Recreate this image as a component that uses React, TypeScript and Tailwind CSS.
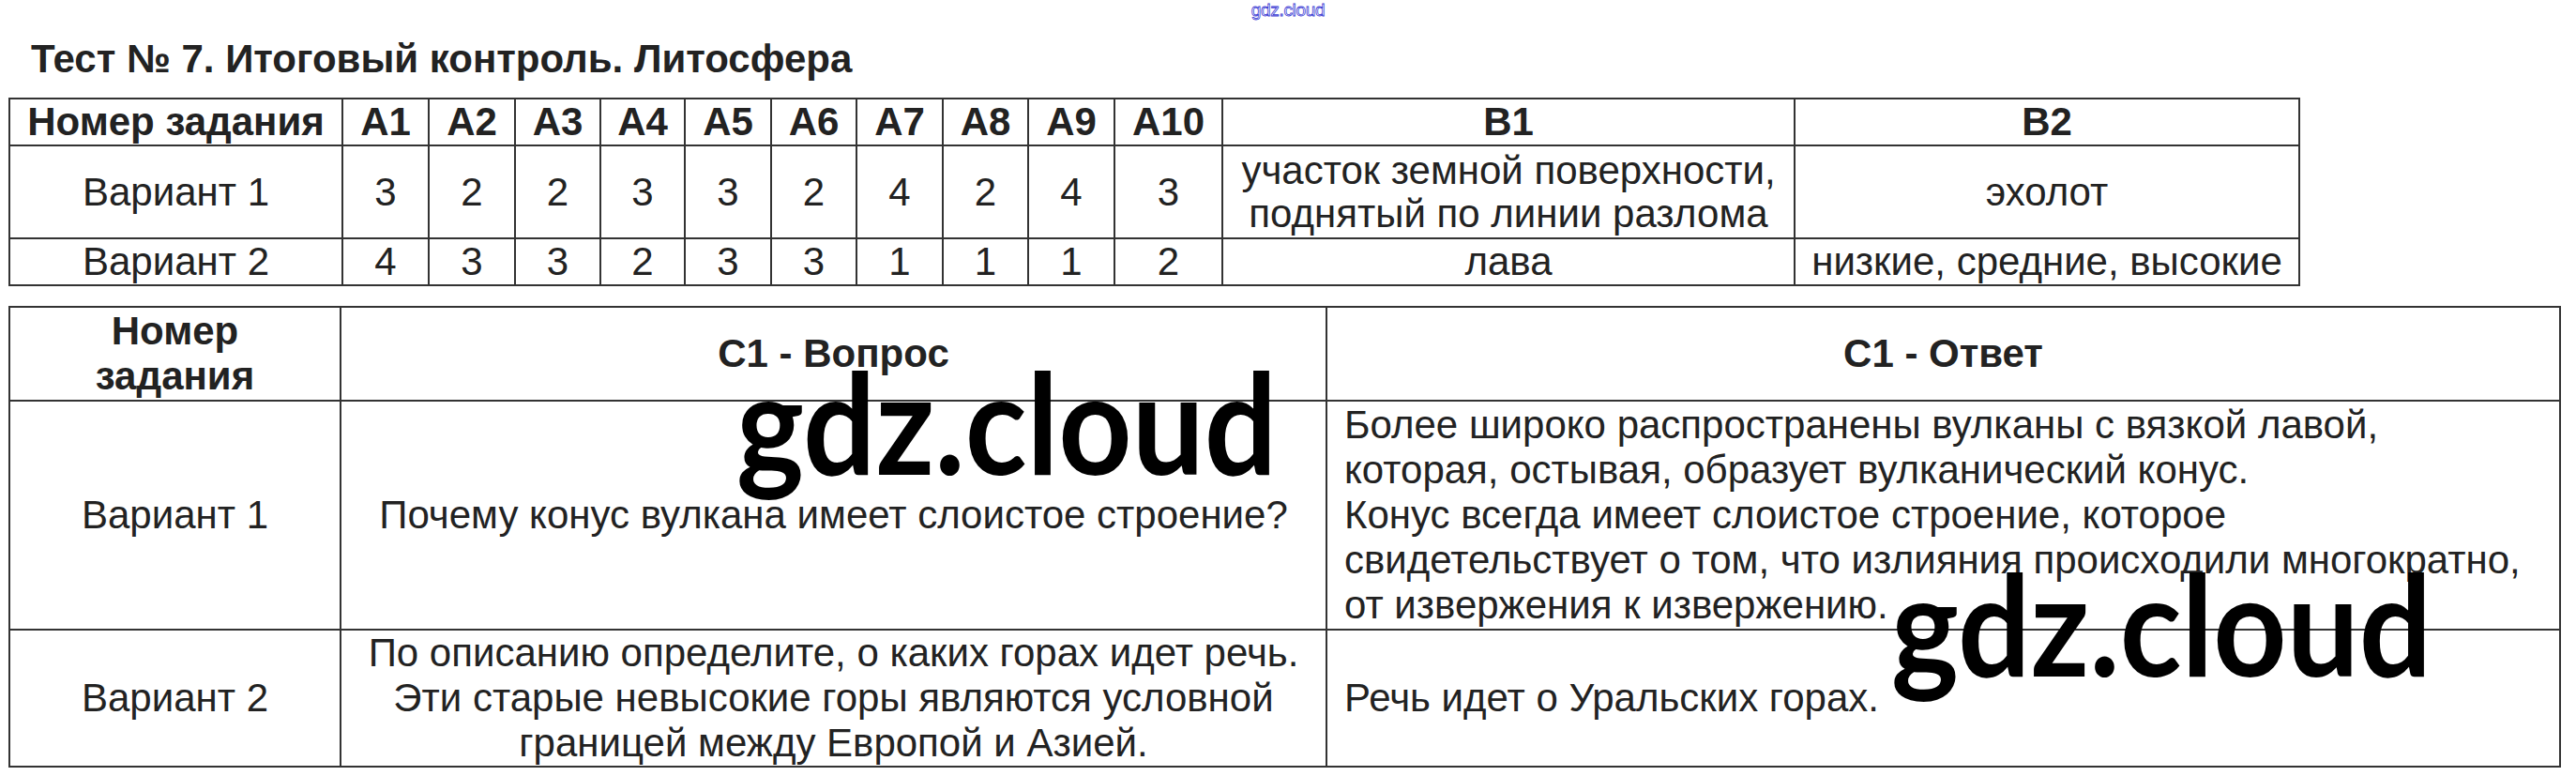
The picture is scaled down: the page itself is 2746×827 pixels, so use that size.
const answersV1 = ['3', '2', '2', '3', '3', '2', '4', '2', '4', '3'];
const answersV2 = ['4', '3', '3', '2', '3', '3', '1', '1', '1', '2'];
const aCols = [
  { label: 'A1', w: 92 },
  { label: 'A2', w: 92 },
  { label: 'A3', w: 91 },
  { label: 'A4', w: 90 },
  { label: 'A5', w: 92 },
  { label: 'A6', w: 91 },
  { label: 'A7', w: 92 },
  { label: 'A8', w: 91 },
  { label: 'A9', w: 92 },
  { label: 'A10', w: 115 },
];

const cell = 'border-2 border-[#333] text-center align-middle p-0';

function Watermark({ className = '' }: { className?: string }) {
  return (
    <div
      className={`absolute font-['Lato',sans-serif] font-bold text-[150px] leading-none text-black origin-top-left scale-x-[0.91] whitespace-nowrap pointer-events-none ${className}`}
    >
      gdz.cloud
    </div>
  );
}

export default function App() {
  return (
    <div className="relative w-[2746px] h-[827px] bg-white overflow-hidden font-['Liberation_Sans',Arial,sans-serif] text-[#222]">
      <div className="flex justify-center h-[22px]">
        <span className="text-[19px] leading-[22px] tracking-[-0.3px] text-white [-webkit-text-stroke:0.8px_#3b3bd4] font-['Liberation_Sans',sans-serif]">
          gdz.cloud
        </span>
      </div>

      <h1 className="ml-[33px] mt-[17px] text-[42px] leading-[48px] font-bold">
        Тест № 7. Итоговый контроль. Литосфера
      </h1>

      <table className="ml-[9px] mt-[17px] border-collapse table-fixed w-[2441px] text-[42px] leading-[46px]">
        <colgroup>
          <col className="w-[355px]" />
          {aCols.map((c) => (
            <col key={c.label} style={{ width: c.w }} />
          ))}
          <col className="w-[610px]" />
          <col className="w-[538px]" />
        </colgroup>
        <tbody>
          <tr className="h-[50px] font-bold">
            <td className={cell}>Номер задания</td>
            {aCols.map((c) => (
              <td key={c.label} className={cell}>
                {c.label}
              </td>
            ))}
            <td className={cell}>B1</td>
            <td className={cell}>B2</td>
          </tr>
          <tr className="h-[99px]">
            <td className={cell}>Вариант 1</td>
            {answersV1.map((a, i) => (
              <td key={i} className={cell}>
                {a}
              </td>
            ))}
            <td className={`${cell} whitespace-nowrap`}>
              участок земной поверхности,
              <br />
              поднятый по линии разлома
            </td>
            <td className={cell}>эхолот</td>
          </tr>
          <tr className="h-[50px]">
            <td className={cell}>Вариант 2</td>
            {answersV2.map((a, i) => (
              <td key={i} className={cell}>
                {a}
              </td>
            ))}
            <td className={cell}>лава</td>
            <td className={`${cell} whitespace-nowrap`}>низкие, средние, высокие</td>
          </tr>
        </tbody>
      </table>

      <table className="ml-[9px] mt-[21px] border-collapse table-fixed w-[2719px] text-[42px] leading-[48px]">
        <colgroup>
          <col className="w-[353px]" />
          <col className="w-[1051px]" />
          <col className="w-[1315px]" />
        </colgroup>
        <tbody>
          <tr className="h-[100px] font-bold">
            <td className={cell}>
              Номер
              <br />
              задания
            </td>
            <td className={cell}>С1 - Вопрос</td>
            <td className={cell}>С1 - Ответ</td>
          </tr>
          <tr className="h-[244px]">
            <td className={cell}>Вариант 1</td>
            <td className={cell}>Почему конус вулкана имеет слоистое строение?</td>
            <td className={`${cell} text-left pl-[18px] whitespace-nowrap`}>
              Более широко распространены вулканы с вязкой лавой,
              <br />
              которая, остывая, образует вулканический конус.
              <br />
              Конус всегда имеет слоистое строение, которое
              <br />
              свидетельствует о том, что излияния происходили многократно,
              <br />
              от извержения к извержению.
            </td>
          </tr>
          <tr className="h-[145px]">
            <td className={cell}>Вариант 2</td>
            <td className={`${cell} whitespace-nowrap`}>
              По описанию определите, о каких горах идет речь.
              <br />
              Эти старые невысокие горы являются условной
              <br />
              границей между Европой и Азией.
            </td>
            <td className={`${cell} text-left pl-[18px]`}>Речь идет о Уральских горах.</td>
          </tr>
        </tbody>
      </table>

      <Watermark className="left-[785px] top-[373px]" />
      <Watermark className="left-[2016px] top-[588px]" />
    </div>
  );
}
